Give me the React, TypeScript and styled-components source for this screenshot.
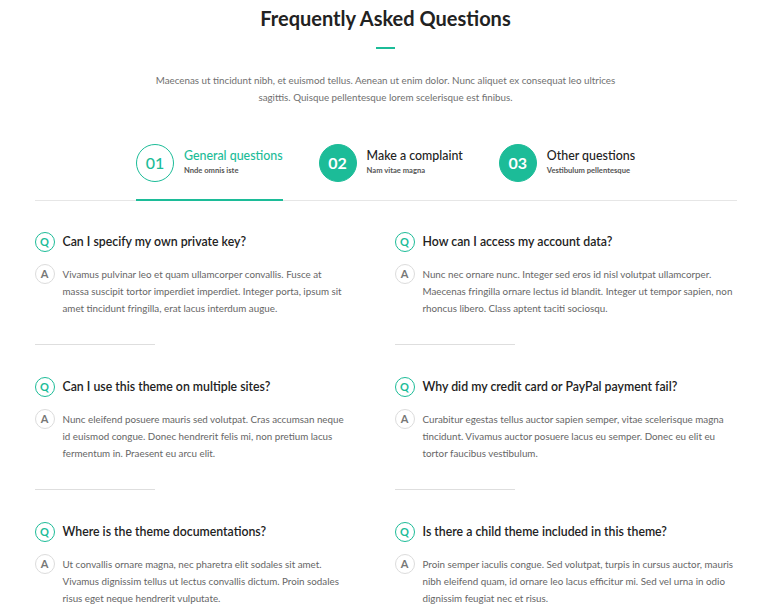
import React from "react";
import styled, { createGlobalStyle } from "styled-components";

const GREEN = "#1cbc98";

const Global = createGlobalStyle`
  html, body { margin: 0; padding: 0; background: #fff; }
  body { font-family: "Lato", "Open Sans", sans-serif; color: #222; }
  * { box-sizing: border-box; }
`;

const Page = styled.div`
  width: 771px;
  padding: 6px 0 0;
`;

const Header = styled.header`
  display: flex;
  flex-direction: column;
  align-items: center;
`;

const Title = styled.h1`
  margin: 0;
  font-size: 20px;
  line-height: 24px;
  font-weight: 700;
  color: #222;
`;

const Divider = styled.div`
  width: 19px;
  height: 1.5px;
  background: ${GREEN};
  margin-top: 17px;
`;

const Intro = styled.p`
  margin: 23px 0 0;
  width: 470px;
  text-align: center;
  font-size: 9.8px;
  line-height: 17px;
  color: #707070;
`;

const Container = styled.div`
  width: 702px;
  margin: 0 auto;
`;

const Tabs = styled.div`
  display: flex;
  justify-content: center;
  gap: 36px;
  margin-top: 38px;
  border-bottom: 1px solid #e6e6e6;
`;

const Tab = styled.div<{ $active?: boolean }>`
  display: flex;
  align-items: center;
  gap: 10px;
  padding-bottom: 17px;
  border-bottom: 2px solid ${(p) => (p.$active ? GREEN : "transparent")};
  margin-bottom: -1px;
`;

const Num = styled.div<{ $active?: boolean }>`
  width: 38px;
  height: 38px;
  border-radius: 50%;
  display: flex;
  align-items: center;
  justify-content: center;
  font-size: 16px;
  font-weight: ${(p) => (p.$active ? 500 : 700)};
  border: 1.2px solid ${GREEN};
  background: ${(p) => (p.$active ? "#fff" : GREEN)};
  color: ${(p) => (p.$active ? GREEN : "#fff")};
`;

const TabText = styled.div`
  display: flex;
  flex-direction: column;
  margin-top: -1px;
`;

const TabTitle = styled.div<{ $active?: boolean }>`
  font-size: 12.4px;
  line-height: 16px;
  font-weight: 500;
  color: ${(p) => (p.$active ? GREEN : "#222")};
`;

const TabSub = styled.div`
  font-size: 7.6px;
  line-height: 12px;
  font-weight: 700;
  color: #555;
`;

const Grid = styled.div`
  display: grid;
  grid-template-columns: 342px 342px;
  column-gap: 18px;
  padding-top: 31px;
`;

const Item = styled.div`
  display: flex;
  flex-direction: column;
  padding-bottom: 32px;
`;

const QRow = styled.div`
  display: flex;
  align-items: center;
  gap: 8px;
`;

const Badge = styled.div<{ $q?: boolean }>`
  flex: none;
  width: 20px;
  height: 20px;
  border-radius: 50%;
  display: flex;
  align-items: center;
  justify-content: center;
  font-size: 11px;
  font-weight: 700;
  border: 1.3px solid ${(p) => (p.$q ? GREEN : "#dcdcdc")};
  color: ${(p) => (p.$q ? GREEN : "#777")};
`;

const Question = styled.h3`
  margin: 0;
  font-size: 12.3px;
  line-height: 20px;
  font-weight: 600;
  color: #222;
`;

const ARow = styled.div`
  display: flex;
  align-items: flex-start;
  gap: 8px;
  margin-top: 14px;
`;

const AnswerBadge = styled(Badge)`
  margin-top: -2px;
`;

const Answer = styled.p`
  margin: 0;
  font-size: 9.8px;
  line-height: 17px;
  color: #666;
`;

const Sep = styled.div`
  width: 120px;
  height: 1px;
  background: #dedede;
  margin-top: 27px;
`;

const tabs = [
  { n: "01", t: "General questions", s: "Nnde omnis iste", active: true },
  { n: "02", t: "Make a complaint", s: "Nam vitae magna" },
  { n: "03", t: "Other questions", s: "Vestibulum pellentesque" },
];

const faqs = [
  {
    q: "Can I specify my own private key?",
    a: [
      "Vivamus pulvinar leo et quam ullamcorper convallis. Fusce at",
      "massa suscipit tortor imperdiet imperdiet. Integer porta, ipsum sit",
      "amet tincidunt fringilla, erat lacus interdum augue.",
    ],
  },
  {
    q: "How can I access my account data?",
    a: [
      "Nunc nec ornare nunc. Integer sed eros id nisl volutpat ullamcorper.",
      "Maecenas fringilla ornare lectus id blandit. Integer ut tempor sapien, non",
      "rhoncus libero. Class aptent taciti sociosqu.",
    ],
  },
  {
    q: "Can I use this theme on multiple sites?",
    a: [
      "Nunc eleifend posuere mauris sed volutpat. Cras accumsan neque",
      "id euismod congue. Donec hendrerit felis mi, non pretium lacus",
      "fermentum in. Praesent eu arcu elit.",
    ],
  },
  {
    q: "Why did my credit card or PayPal payment fail?",
    a: [
      "Curabitur egestas tellus auctor sapien semper, vitae scelerisque magna",
      "tincidunt. Vivamus auctor posuere lacus eu semper. Donec eu elit eu",
      "tortor faucibus vestibulum.",
    ],
  },
  {
    q: "Where is the theme documentations?",
    a: [
      "Ut convallis ornare magna, nec pharetra elit sodales sit amet.",
      "Vivamus dignissim tellus ut lectus convallis dictum. Proin sodales",
      "risus eget neque hendrerit vulputate.",
    ],
  },
  {
    q: "Is there a child theme included in this theme?",
    a: [
      "Proin semper iaculis congue. Sed volutpat, turpis in cursus auctor, mauris",
      "nibh eleifend quam, id ornare leo lacus efficitur mi. Sed vel urna in odio",
      "dignissim feugiat nec et risus.",
    ],
  },
];

export default function App() {
  return (
    <Page>
      <Global />
      <Header>
        <Title>Frequently Asked Questions</Title>
        <Divider />
        <Intro>
          Maecenas ut tincidunt nibh, et euismod tellus. Aenean ut enim dolor. Nunc aliquet ex consequat leo ultrices
          sagittis. Quisque pellentesque lorem scelerisque est finibus.
        </Intro>
      </Header>
      <Container>
        <Tabs>
          {tabs.map((t) => (
            <Tab key={t.n} $active={t.active}>
              <Num $active={t.active}>{t.n}</Num>
              <TabText>
                <TabTitle $active={t.active}>{t.t}</TabTitle>
                <TabSub>{t.s}</TabSub>
              </TabText>
            </Tab>
          ))}
        </Tabs>
        <Grid>
          {faqs.map((f, i) => (
            <Item key={i}>
              <QRow>
                <Badge $q>Q</Badge>
                <Question>{f.q}</Question>
              </QRow>
              <ARow>
                <AnswerBadge>A</AnswerBadge>
                <Answer>
                  {f.a.map((line, j) => (
                    <React.Fragment key={j}>
                      {line}
                      {j < f.a.length - 1 && <br />}
                    </React.Fragment>
                  ))}
                </Answer>
              </ARow>
              <Sep />
            </Item>
          ))}
        </Grid>
      </Container>
    </Page>
  );
}
